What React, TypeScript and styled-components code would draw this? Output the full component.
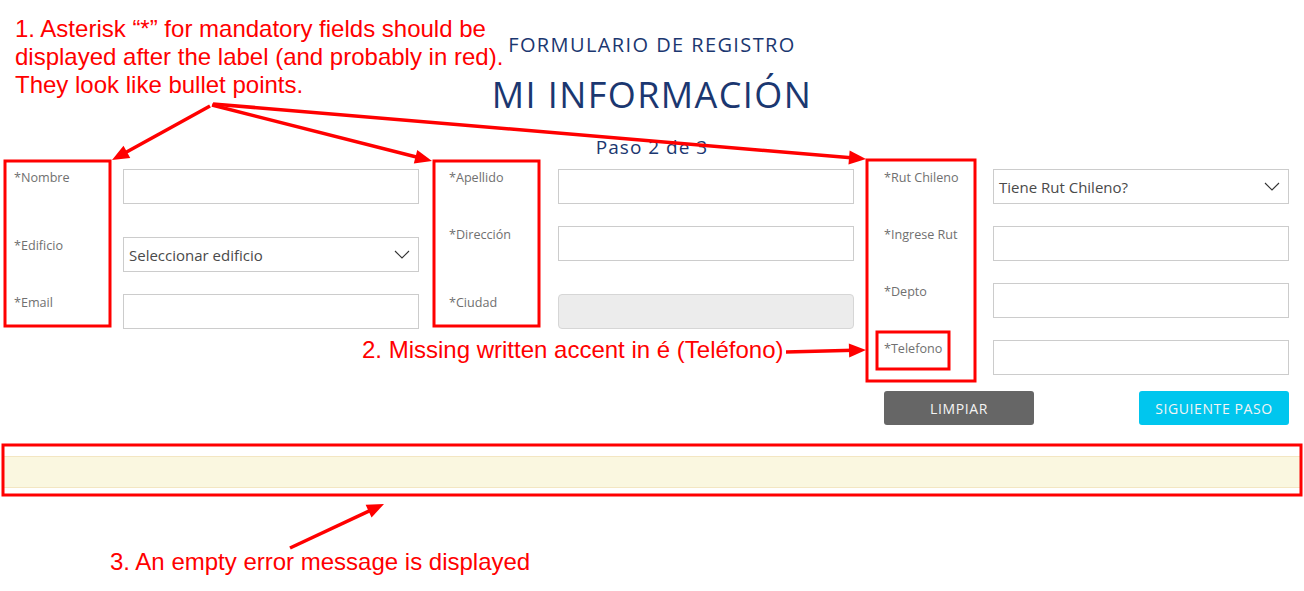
import * as React from 'react';
import styled, { createGlobalStyle } from 'styled-components';

const GlobalStyle = createGlobalStyle`
  html, body {
    margin: 0;
    padding: 0;
    background: #ffffff;
  }
  body {
    font-family: "Open Sans", "Liberation Sans", sans-serif;
    -webkit-font-smoothing: antialiased;
  }
`

const Page = styled.div`
  position: relative;
  width: 1304px;
  height: 591px;
  overflow: hidden;
  background: #ffffff;
`

const Header = styled.div`
  display: flex;
  flex-direction: column;
  align-items: center;
  color: #1b3770;
  padding-top: 33px;
`

const Kicker = styled.div`
  font-size: 20px;
  line-height: 24px;
  letter-spacing: 1.4px;
`

const Title = styled.div`
  margin-top: 16px;
  font-size: 36px;
  line-height: 44px;
  letter-spacing: 1.4px;
`

const Step = styled.div`
  margin-top: 19px;
  font-size: 19px;
  line-height: 22px;
  letter-spacing: 1px;
`

const FormGrid = styled.div`
  display: flex;
  gap: 30px;
  padding: 0 14px 0 14px;
  margin-top: 11px;
`

const Column = styled.div`
  display: flex;
  flex-direction: column;
  width: 405px;
`

const Row = styled.div<{ $offset: number }>`
  display: flex;
  margin-top: ${p => p.$offset}px;
`

const Label = styled.div`
  width: 109px;
  padding-top: 1px;
  font-size: 12.6px;
  line-height: 16px;
  color: #707070;
`

const TextInput = styled.div<{ $disabled?: boolean }>`
  width: 296px;
  height: 35px;
  box-sizing: border-box;
  border: 1px solid ${p => (p.$disabled ? '#d6d6d6' : '#cccccc')};
  border-radius: ${p => (p.$disabled ? '4px' : '0')};
  background: ${p => (p.$disabled ? '#ececec' : '#ffffff')};
`

const SelectBox = styled.div`
  width: 296px;
  height: 35px;
  box-sizing: border-box;
  border: 1px solid #cccccc;
  display: flex;
  align-items: center;
  justify-content: space-between;
  padding: 0 8px 0 5px;
  font-size: 15px;
  color: #4a4a4a;
`

const Actions = styled.div`
  display: flex;
  justify-content: space-between;
  margin-top: 16px;
`

const Button = styled.div<{ $primary?: boolean }>`
  width: 150px;
  height: 34px;
  border-radius: 3px;
  display: flex;
  align-items: center;
  justify-content: center;
  font-size: 14px;
  letter-spacing: 0.6px;
  color: #f4f4f4;
  background: ${p => (p.$primary ? '#00c6ee' : '#666666')};
`

const ErrorBar = styled.div`
  margin: 31px 2px 0;
  height: 32px;
  box-sizing: border-box;
  background: #faf7e0;
  border-top: 1px solid #f3e6c2;
  border-bottom: 1px solid #f3e6c2;
`

const Overlay = styled.svg`
  position: absolute;
  left: 0;
  top: 0;
  pointer-events: none;
`

const Note = styled.div<{ $x: number; $y: number }>`
  position: absolute;
  left: ${p => p.$x}px;
  top: ${p => p.$y}px;
  font-family: "Liberation Sans", Arial, sans-serif;
  font-size: 24px;
  line-height: 28px;
  color: #ff0000;
  white-space: nowrap;
`

const Chevron = () => (
  <svg width="16" height="9" viewBox="0 0 16 9">
    <polyline points="1,1 8,8 15,1" fill="none" stroke="#333" strokeWidth="1.1" />
  </svg>
)

const Select = ({ text }: { text: string }) => (
  <SelectBox>
    <span>{text}</span>
    <Chevron />
  </SelectBox>
)

type Field = { label: string; offset: number; kind?: 'select' | 'disabled'; text?: string }

const columns: Field[][] = [
  [
    { label: '*Nombre', offset: 0 },
    { label: '*Edificio', offset: 33, kind: 'select', text: 'Seleccionar edificio' },
    { label: '*Email', offset: 22 },
  ],
  [
    { label: '*Apellido', offset: 0 },
    { label: '*Dirección', offset: 22 },
    { label: '*Ciudad', offset: 33, kind: 'disabled' },
  ],
  [
    { label: '*Rut Chileno', offset: 0, kind: 'select', text: 'Tiene Rut Chileno?' },
    { label: '*Ingrese Rut', offset: 22 },
    { label: '*Depto', offset: 22 },
    { label: '*Telefono', offset: 22 },
  ],
]

// arrow head triangle pointing at (x2, y2)
const head = (x1: number, y1: number, x2: number, y2: number, len = 17, w = 7) => {
  const dx = x2 - x1
  const dy = y2 - y1
  const d = Math.sqrt(dx * dx + dy * dy)
  const ux = dx / d
  const uy = dy / d
  const bx = x2 - ux * len
  const by = y2 - uy * len
  return `${x2},${y2} ${bx - uy * w},${by + ux * w} ${bx + uy * w},${by - ux * w}`
}

const arrows = [
  [210, 106, 112, 160],
  [212, 105, 432, 161],
  [213, 104, 866, 159],
  [786, 352, 866, 350],
  [290, 548, 384, 504],
]

const boxes = [
  [5, 161, 105, 165],
  [434, 161, 105, 165],
  [867, 160, 108, 221],
  [877, 332, 72, 37],
  [3, 445, 1298, 50],
]

const App = () => {
  return (
    <Page>
      <GlobalStyle />
      <Header>
        <Kicker>FORMULARIO DE REGISTRO</Kicker>
        <Title>MI INFORMACIÓN</Title>
        <Step>Paso 2 de 3</Step>
      </Header>
      <FormGrid>
        {columns.map((fields, i) => (
          <Column key={i}>
            {fields.map(f => (
              <Row key={f.label} $offset={f.offset}>
                <Label>{f.label}</Label>
                {f.kind === 'select' ? (
                  <Select text={f.text || ''} />
                ) : (
                  <TextInput $disabled={f.kind === 'disabled'} />
                )}
              </Row>
            ))}
            {i === 2 && (
              <Actions>
                <Button>LIMPIAR</Button>
                <Button $primary>SIGUIENTE PASO</Button>
              </Actions>
            )}
          </Column>
        ))}
      </FormGrid>
      <ErrorBar />

      <Overlay width="1304" height="591" viewBox="0 0 1304 591">
        {boxes.map(([x, y, w, h], i) => (
          <rect key={i} x={x} y={y} width={w} height={h} fill="none" stroke="#ff0000" strokeWidth="3" />
        ))}
        {arrows.map(([x1, y1, x2, y2], i) => {
          const d = Math.hypot(x2 - x1, y2 - y1)
          const ex = x2 - ((x2 - x1) / d) * 12
          const ey = y2 - ((y2 - y1) / d) * 12
          return (
            <g key={i}>
              <line x1={x1} y1={y1} x2={ex} y2={ey} stroke="#ff0000" strokeWidth="3.5" />
              <polygon points={head(x1, y1, x2, y2)} fill="#ff0000" />
            </g>
          )
        })}
      </Overlay>

      <Note $x={15} $y={15}>
        1. Asterisk “*” for mandatory fields should be
        <br />
        displayed after the label (and probably in red).
        <br />
        They look like bullet points.
      </Note>
      <Note $x={362} $y={336}>2. Missing written accent in é (Teléfono)</Note>
      <Note $x={110} $y={548}>3. An empty error message is displayed</Note>
    </Page>
  );
}

export default App;
